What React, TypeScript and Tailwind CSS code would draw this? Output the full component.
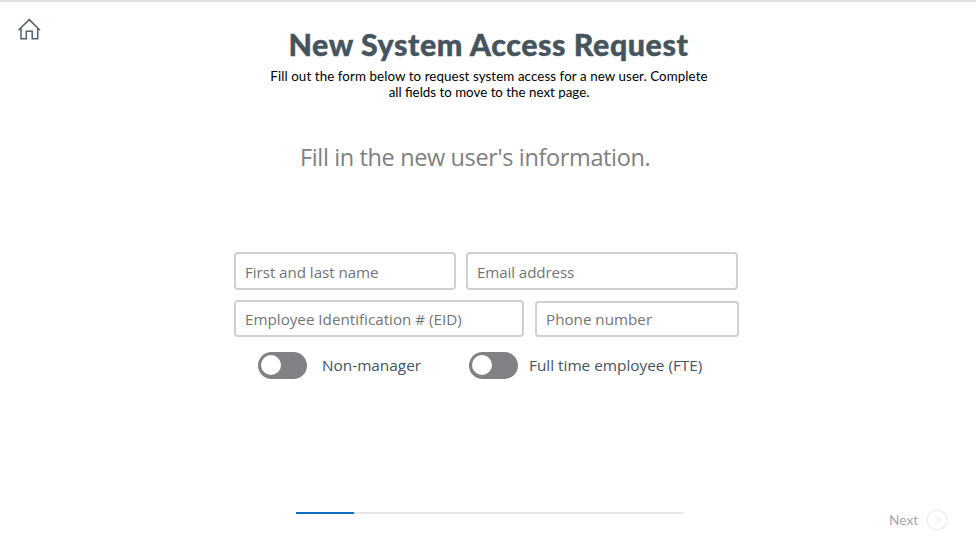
import { useState } from "react";

function Field({ placeholder, className }: { placeholder: string; className: string }) {
  return (
    <input
      type="text"
      placeholder={placeholder}
      aria-label={placeholder}
      className={`rounded border-2 border-[#d0d0d0] bg-white pl-[9px] text-[15.2px] text-[#444] outline-none placeholder:text-[#757575] placeholder:opacity-100 ${className}`}
    />
  );
}

function Toggle({ label }: { label: string }) {
  const [on, setOn] = useState(false);
  return (
    <button
      type="button"
      role="switch"
      aria-checked={on}
      aria-label={label}
      onClick={() => setOn(!on)}
      className={`flex h-[27px] w-[49px] shrink-0 items-center rounded-full bg-[#808185] px-[3px] ${on ? "justify-end" : "justify-start"}`}
    >
      <span className="-mt-px size-5 rounded-full bg-white" />
    </button>
  );
}

export default function App() {
  return (
    <div className="flex h-[552px] w-[976px] flex-col overflow-hidden border-t-2 border-[#e1e1e1] bg-white font-['Open_Sans','Noto_Sans',sans-serif]">
      <header className="flex h-[101px] shrink-0 items-start">
        <button type="button" aria-label="Home" className="mt-[16px] ml-[17px] w-6">
          <svg width="24" height="24" viewBox="0 0 24 24" fill="none" stroke="#53616b" strokeWidth="1.5">
            <path d="M1.4 12.2 12.3 1.6 23 12.2M4 10V20.8H9.3V13.2H15.2V20.8H20.7V10" />
          </svg>
        </button>
        <div className="ml-[198px] w-[500px] pt-[24px] text-center font-['Lato',sans-serif]">
          <h1 className="-ml-px text-[30.4px] leading-9 font-black tracking-[0.56px] whitespace-nowrap text-[#46545e] [-webkit-text-stroke:0.4px_#46545e]">New System Access Request</h1>
          <p className="mt-[6px] text-[13.33px] leading-4 whitespace-nowrap text-black">
            <span className="tracking-[0.09px]">Fill out the form below to request system access for a new user. Complete</span>
            <br />
            all fields to move to the next page.
          </p>
        </div>
      </header>

      <main className="flex h-[390px] shrink-0 flex-col">
        <h2 className="mt-[38px] ml-[300px] text-[23.5px] leading-8 tracking-[-0.37px] whitespace-nowrap text-[#808080]">
          Fill in the new user's information.
        </h2>
        <form className="mt-[79px] ml-[234px] flex flex-col">
          <div className="flex gap-[10px]">
            <Field placeholder="First and last name" className="h-[38px] w-[222px] pt-[2px] tracking-[-0.06px]" />
            <Field placeholder="Email address" className="h-[38px] w-[272px] pt-[2px] tracking-[-0.12px]" />
          </div>
          <div className="mt-[10px] flex items-end gap-[11px]">
            <Field placeholder="Employee Identification # (EID)" className="h-[37px] w-[290px]" />
            <Field placeholder="Phone number" className="h-[36px] w-[204px]" />
          </div>
          <div className="mt-[15px] ml-6 flex items-center text-[15.35px] whitespace-nowrap text-[#46545e]">
            <Toggle label="Non-manager" />
            <span className="ml-[15px] w-[147px]">Non-manager</span>
            <Toggle label="Full time employee (FTE)" />
            <span className="ml-[11px]">Full time employee (FTE)</span>
          </div>
        </form>
      </main>

      <footer className="flex items-start">
        <div className="mt-[19px] ml-[296px] h-[2px] w-[387px] bg-[#e6e6e6]">
          <div className="h-full w-[58px] bg-[#106ebe]" />
        </div>
        <button type="button" className="mt-[16px] ml-[206px] flex items-center gap-[8px] font-['Lato',sans-serif] text-[13.7px] text-[#a6a6a6]">
          <span className="mt-px">Next</span>
          <svg width="22" height="22" viewBox="0 0 22 22" fill="none" stroke="#f0f0f0" strokeWidth="1.5">
            <circle cx="11" cy="11" r="10" />
            <path d="m9 6.5 4.7 4.5L9 15.5" />
          </svg>
        </button>
      </footer>
    </div>
  );
}
